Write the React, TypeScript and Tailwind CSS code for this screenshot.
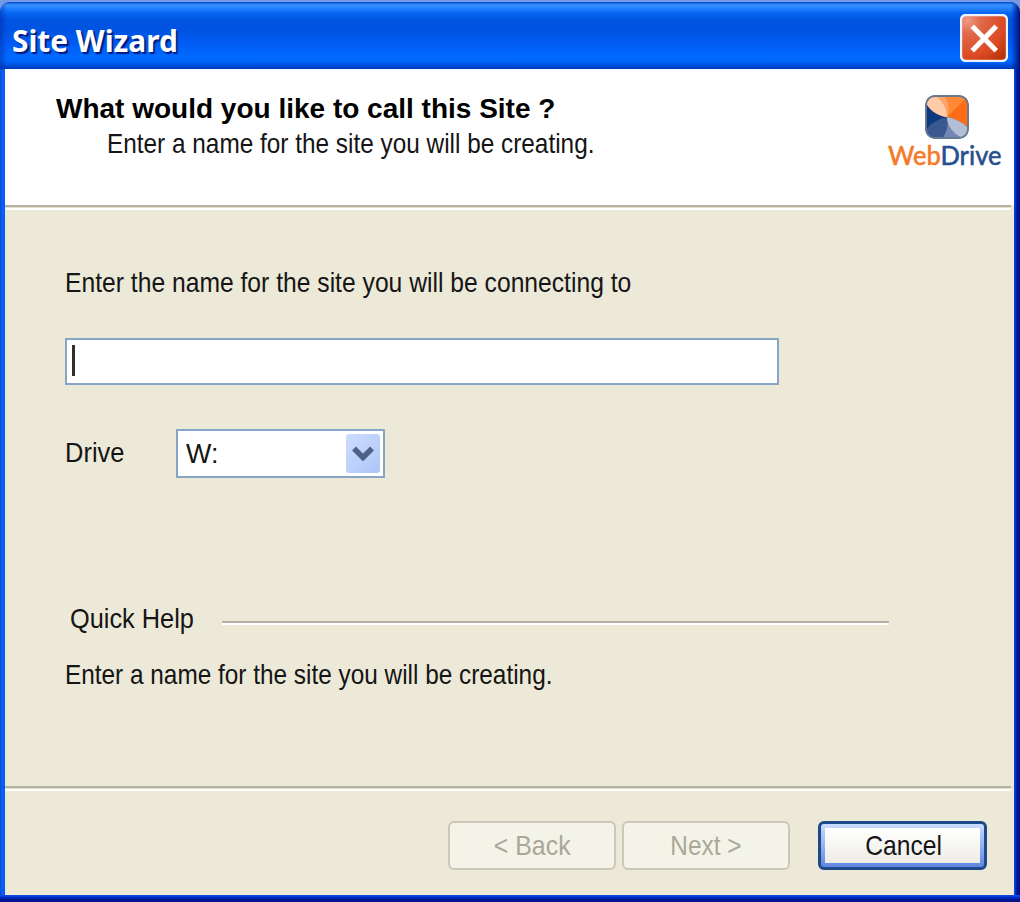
import React from 'react';

const bodyText =
  "block w-max origin-left whitespace-nowrap text-[28px] leading-8";

function CloseIcon() {
  return (
    <svg viewBox="0 0 48 48" className="size-12" aria-hidden="true">
      <defs>
        <radialGradient id="close-fill" cx="0.15" cy="0.12" r="1.1">
          <stop offset="0" stopColor="#ee9a84" />
          <stop offset="0.25" stopColor="#e06a4c" />
          <stop offset="0.7" stopColor="#dc4b24" />
          <stop offset="1" stopColor="#b93208" />
        </radialGradient>
      </defs>
      <rect x="1" y="1" width="46" height="46" rx="5" fill="url(#close-fill)" stroke="#eef1fb" strokeWidth="2.4" />
      <path d="M14 14L34.5 35M34.5 14L14 35" stroke="#fff" strokeWidth="5" strokeLinecap="square" />
    </svg>
  );
}

function LogoMark() {
  return (
    <svg viewBox="0 0 44 44" className="size-11" aria-hidden="true">
      <defs>
        <clipPath id="mark-clip">
          <rect x="0.5" y="0.5" width="43" height="43" rx="9" />
        </clipPath>
      </defs>
      <g clipPath="url(#mark-clip)">
        <rect width="44" height="44" fill="#0d397f" />
        <path d="M0 0H44V35C40 28 31 24 22 22C12 21 4 15 0 6Z" fill="#ff8937" />
        <path d="M22 22L41 3L44 0V35C40 28 31 24 22 22Z" fill="#ff6c16" />
        <path d="M8 0H19C24 7 25 15 22 22Z" fill="#ffa366" />
        <path d="M0 6L9 0C17 5 22 13 22 22C12 21 4 15 0 6Z" fill="#ffcba8" />
        <path d="M22 22L3 40L6 44H44V35C40 28 31 24 22 22Z" fill="#7188b4" />
        <path d="M22 22C13 24 4 29 0 36V44H17C22 37 24 29 22 22Z" fill="#38588f" />
        <path d="M22 22C31 24 40 28 44 35V38L37 43C28 38 22 31 22 22Z" fill="#b2bfd6" />
      </g>
      <rect x="1" y="1" width="42" height="42" rx="9" fill="none" stroke="#667991" strokeWidth="1.8" />
    </svg>
  );
}

function Divider({ className = "" }: { className?: string }) {
  return <div className={`h-[5px] border-t-2 border-b-2 border-t-[#b5b1a3] border-b-white bg-[#e2dfcf] ${className}`} />;
}

export default function App() {
  return (
    <div className="flex h-[902px] w-[1020px] flex-col overflow-hidden bg-[#7798e2] font-['Liberation_Sans',sans-serif] text-[#151515]">
      <div className="mt-[2px] flex h-[900px] flex-col overflow-hidden rounded-t-[10px] bg-[linear-gradient(90deg,#0648dc_0px,#0a60f4_2px,#0a60f4_4px,#0550e6_5px,#0550e6_1014px,#0038e0_1015px,#001795_1017px,#00137f_1020px)]">
        <header className="flex h-[67px] shrink-0 items-start justify-between bg-[linear-gradient(90deg,#0030b090_0px,transparent_7px,transparent_1011px,#00188aa0_1016px,#00137f_1020px),linear-gradient(180deg,#0048c8_0px,#3a92ff_3px,#2583ff_6px,#0666f2_11px,#0054e0_18px,#0054e3_30px,#005cf4_42px,#0069ff_54px,#0067fc_59px,#0052e0_63px,#0037b8_67px)] pr-3 pl-3">
          <h1 className="mt-[18px] origin-left scale-x-[0.962] font-['Noto_Sans',sans-serif] text-[31px] leading-10 font-bold whitespace-nowrap text-white [text-shadow:2px_2px_1px_#001c80]">
            Site Wizard
          </h1>
          <button type="button" aria-label="Close" className="mt-3">
            <CloseIcon />
          </button>
        </header>

        <main className="mr-[6px] ml-[5px] flex h-[826px] shrink-0 flex-col bg-[#ece9d8]">
          <section className="flex h-[136px] shrink-0 justify-between bg-white">
            <div className="pt-6 pl-[51px]">
              <h2 className="block w-max origin-left text-[28px] leading-8 font-bold whitespace-nowrap text-black">
                What would you like to call this Site ?
              </h2>
              <p className={`${bodyText} mt-[3px] ml-[51px] scale-x-[0.87]`}>Enter a name for the site you will be creating.</p>
            </div>
            <div className="flex w-[126px] flex-col items-start pt-[26px]">
              <div className="ml-[37px]"><LogoMark /></div>
              <div className="origin-left scale-x-[0.98] font-['Lato',sans-serif] text-[26px] leading-8 font-medium whitespace-nowrap [-webkit-text-stroke:0.4px]">
                <span className="text-[#f47a28]">Web</span><span className="text-[#28508d]">Drive</span>
              </div>
            </div>
          </section>
          <Divider className="mr-[3px] shrink-0" />

          <section className="flex h-[576px] shrink-0 flex-col pl-[60px]">
            <label htmlFor="site-name" className={`${bodyText} mt-[57px] scale-x-[0.881]`}>
              Enter the name for the site you will be connecting to
            </label>
            <div id="site-name" className="mt-[39px] flex h-[47px] w-[714px] items-center border-2 border-[#86a5c4] bg-white pl-[5px]">
              <span className="mb-[3px] h-[31px] w-[3px] bg-[#303030]" />
            </div>
            <div className="mt-11 flex h-12 items-center">
              <div className="w-[111px]"><span className={`${bodyText} scale-x-[0.91]`}>Drive</span></div>
              <div className="flex h-[49px] w-[209px] items-center justify-between border-2 border-[#86a5c4] bg-white pr-[3px] pl-2">
                <span className={`${bodyText} mt-0.5 scale-x-[0.96]`}>W:</span>
                <span className="flex h-[39px] w-[34px] items-center justify-center rounded-[3px] bg-linear-to-br from-[#cfdcff] to-[#acc6f8]">
                  <svg viewBox="0 0 22 16" className="h-4 w-[22px]" aria-hidden="true">
                    <path d="M2 3.5L11 12.5L20 3.5" fill="none" stroke="#4d6185" strokeWidth="5.4" />
                  </svg>
                </span>
              </div>
            </div>
            <div className="mt-[126px] flex h-8 items-center pl-[5px]">
              <div className="w-[152px]"><span className={`${bodyText} scale-x-[0.905]`}>Quick Help</span></div>
              <div className="mt-2 h-1 w-[667px] border-t-2 border-b-2 border-t-[#b5b1a3] border-b-white" />
            </div>
            <p className={`${bodyText} mt-6 scale-x-[0.87]`}>Enter a name for the site you will be creating.</p>
          </section>
          <Divider className="mr-[3px] shrink-0" />

          <footer className="flex h-[104px] items-start justify-end pt-[30px] pr-[27px]">
            <button type="button" disabled className="mr-[6px] flex h-[49px] w-[168px] items-center justify-center rounded-md border-2 border-[#cbc8bb] bg-[#f4f3e8] text-[#aaa799]">
              <span className="scale-x-[0.89] text-[28px] whitespace-nowrap">&lt; Back</span>
            </button>
            <button type="button" disabled className="mr-7 flex h-[49px] w-[168px] items-center justify-center rounded-md border-2 border-[#cbc8bb] bg-[#f4f3e8] text-[#aaa799]">
              <span className="scale-x-[0.87] text-[28px] whitespace-nowrap">Next &gt;</span>
            </button>
            <button type="button" className="flex h-[49px] w-[169px] items-center justify-center rounded-md border-[3px] border-[#1c4a88] bg-linear-to-b from-[#cbdcff] to-[#5f85e0] p-1">
              <span className="flex size-full items-center justify-center bg-linear-to-b from-white to-[#edece7] pl-0.5">
                <span className="scale-x-[0.88] text-[28px] whitespace-nowrap">Cancel</span>
              </span>
            </button>
          </footer>
        </main>
        <div className="h-[7px] shrink-0 bg-[linear-gradient(180deg,#1550db_0px,#0038df_2px,#001995_4px,#00128a_7px)]" />
      </div>
    </div>
  );
}
